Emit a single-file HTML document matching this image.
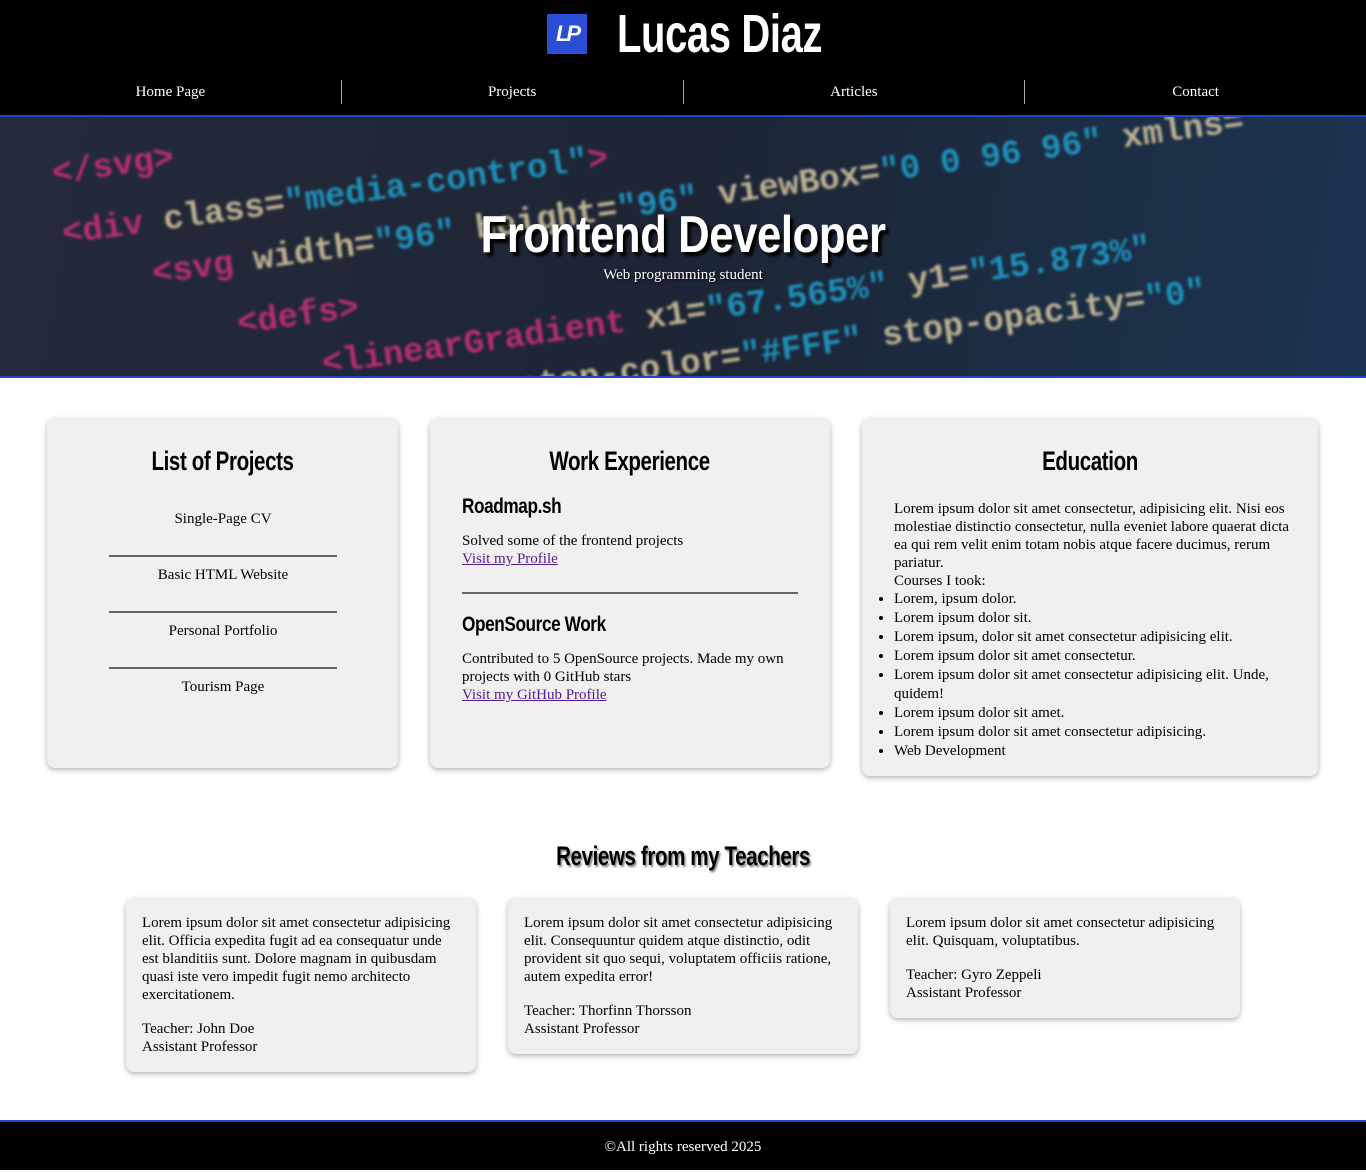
<!DOCTYPE html>
<html><head><meta charset="utf-8"><style>
*{box-sizing:border-box}
body{margin:0;width:1366px;height:1170px;background:#fff;font-family:"Liberation Serif",serif;font-size:15px;color:#000;position:relative;overflow:hidden}
.h{font-family:"Liberation Sans",sans-serif;font-weight:bold;letter-spacing:-0.5px}
.c{display:inline-block;transform:scaleX(.76);transform-origin:50% 50%}
header{position:absolute;left:0;top:0;width:1366px;height:117px;background:#000;border-bottom:2px solid #2445c9}
.logo{position:absolute;left:547px;top:14px;width:40px;height:40px;background:#2a4fd6;color:#fff;font:italic bold 22px "Liberation Sans",sans-serif;text-align:center;line-height:40px;letter-spacing:-3px}
.title{position:absolute;left:617px;top:2px;color:#fff;font-size:54px;line-height:64px;transform:scaleX(.74);transform-origin:0 50%}
nav{position:absolute;top:80px;left:0;width:1366px;height:24px;display:flex}
nav div{flex:1;text-align:center;color:#fff;line-height:24px;border-right:1px solid #aaa}
nav div:last-child{border-right:none}
.hero{position:absolute;left:0;top:117px;width:1366px;height:261px;background:linear-gradient(100deg,#252a3a,#1d2535 50%,#1b3450);border-bottom:2px solid #2445c9;overflow:hidden}
.code{position:absolute;font-family:"Liberation Mono",monospace;font-weight:bold;font-size:34px;white-space:pre;transform:rotate(-8deg);transform-origin:0 0;filter:blur(1.2px);opacity:.85}
.p{color:#d0307a}.b{color:#1fa3d0}.y{color:#d9c9a0}
.hero h1{position:absolute;left:0;width:1366px;top:88px;margin:0;text-align:center;color:#fff;font-size:52px;line-height:60px;text-shadow:4px 4px 3px #000}
.hero h1 span{display:inline-block;transform:scaleX(.84)}
.hero .sub{position:absolute;left:0;width:1366px;top:150px;text-align:center;color:#fff;text-shadow:1px 1px 2px #000}
.card{position:absolute;background:#f0f0f0;border-radius:8px;box-shadow:0 2px 6px rgba(0,0,0,.3)}
.card h2{margin:0;text-align:center;font-size:27px;line-height:30px;position:absolute;left:0;right:0;top:28px}
.pl{position:absolute;left:62px;width:228px;text-align:center}
.pl div{height:56px;line-height:36px;border-bottom:2px solid #666}
.pl div:last-child{border:none}
a{color:#551a8b}
h3{margin:0;font-size:21px;display:inline-block;transform:scaleX(.82);transform-origin:0 50%;white-space:nowrap}
ul{margin:0;padding-left:0}
li{margin-left:0;line-height:19px}
.rv{line-height:18px;padding:16px 16px}
footer{position:absolute;left:0;top:1120px;width:1366px;height:50px;background:#000;border-top:2px solid #2445c9;color:#fff;text-align:center;line-height:50px}
</style></head><body>
<header>
<div class="logo">LP</div>
<div class="title h">Lucas Diaz</div>
<nav><div>Home Page</div><div>Projects</div><div>Articles</div><div>Contact</div></nav>
</header>
<div class="hero">
<div class="code" style="left:50px;top:40px"><span class="p">&lt;/svg&gt;</span></div>
<div class="code" style="left:60px;top:100px"><span class="p">&lt;div</span> <span class="y">class=</span><span class="b">"media-control"</span><span class="p">&gt;</span></div>
<div class="code" style="left:150px;top:140px"><span class="p">&lt;svg</span> <span class="y">width=</span><span class="b">"96"</span> <span class="y">height=</span><span class="b">"96"</span> <span class="y">viewBox=</span><span class="b">"0 0 96 96"</span> <span class="y">xmlns=</span></div>
<div class="code" style="left:235px;top:190px"><span class="p">&lt;defs&gt;</span></div>
<div class="code" style="left:320px;top:230px"><span class="p">&lt;linearGradient</span> <span class="y">x1=</span><span class="b">"67.565%"</span> <span class="y">y1=</span><span class="b">"15.873%"</span></div>
<div class="code" style="left:395px;top:270px"><span class="p">&lt;stop</span> <span class="y">stop-color=</span><span class="b">"#FFF"</span> <span class="y">stop-opacity=</span><span class="b">"0"</span></div>
<h1 class="h"><span>Frontend Developer</span></h1>
<div class="sub">Web programming student</div>
</div>

<div class="card" style="left:47px;top:418px;width:351px;height:350px">
<h2 class="h"><span class="c">List of Projects</span></h2>
<div class="pl" style="top:83px"><div>Single-Page CV</div><div>Basic HTML Website</div><div>Personal Portfolio</div><div>Tourism Page</div></div>
</div>

<div class="card" style="left:430px;top:418px;width:400px;height:350px">
<h2 class="h"><span class="c">Work Experience</span></h2>
<div style="position:absolute;left:32px;top:80px;width:336px;line-height:18px">
<h3 class="h">Roadmap.sh</h3>
<div style="margin-top:14px">Solved some of the frontend projects<br><a href="#">Visit my Profile</a></div>
<div style="border-top:2px solid #666;margin:24px 0 22px"></div>
<h3 class="h">OpenSource Work</h3>
<div style="margin-top:14px">Contributed to 5 OpenSource projects. Made my own projects with 0 GitHub stars<br><a href="#">Visit my GitHub Profile</a></div>
</div>
</div>

<div class="card" style="left:862px;top:418px;width:456px;height:358px">
<h2 class="h"><span class="c">Education</span></h2>
<div style="position:absolute;left:32px;top:82px;width:400px;line-height:18px">
<div>Lorem ipsum dolor sit amet consectetur, adipisicing elit. Nisi eos molestiae distinctio consectetur, nulla eveniet labore quaerat dicta ea qui rem velit enim totam nobis atque facere ducimus, rerum pariatur.</div>
<div>Courses I took:</div>
<ul><li>Lorem, ipsum dolor.</li><li>Lorem ipsum dolor sit.</li><li>Lorem ipsum, dolor sit amet consectetur adipisicing elit.</li><li>Lorem ipsum dolor sit amet consectetur.</li><li>Lorem ipsum dolor sit amet consectetur adipisicing elit. Unde, quidem!</li><li>Lorem ipsum dolor sit amet.</li><li>Lorem ipsum dolor sit amet consectetur adipisicing.</li><li>Web Development</li></ul>
</div>
</div>

<div class="h" style="position:absolute;left:0;width:1366px;top:840px;text-align:center;font-size:27px;line-height:32px;text-shadow:2px 2px 2px #888"><span class="c">Reviews from my Teachers</span></div>

<div class="card rv" style="left:126px;top:898px;width:350px;height:174px">Lorem ipsum dolor sit amet consectetur adipisicing elit. Officia expedita fugit ad ea consequatur unde est blanditiis sunt. Dolore magnam in quibusdam quasi iste vero impedit fugit nemo architecto exercitationem.<div style="height:16px"></div>Teacher: John Doe<br>Assistant Professor</div>
<div class="card rv" style="left:508px;top:898px;width:350px;height:156px">Lorem ipsum dolor sit amet consectetur adipisicing elit. Consequuntur quidem atque distinctio, odit provident sit quo sequi, voluptatem officiis ratione, autem expedita error!<div style="height:16px"></div>Teacher: Thorfinn Thorsson<br>Assistant Professor</div>
<div class="card rv" style="left:890px;top:898px;width:350px;height:120px">Lorem ipsum dolor sit amet consectetur adipisicing elit. Quisquam, voluptatibus.<div style="height:16px"></div>Teacher: Gyro Zeppeli<br>Assistant Professor</div>

<footer>©All rights reserved 2025</footer>
</body></html>
